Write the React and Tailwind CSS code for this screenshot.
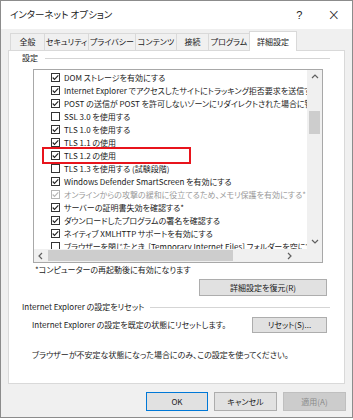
import React from "react";

const Check = ({ checked, disabled }) => (
  <svg width="9" height="9" viewBox="0 0 9 9" className="shrink-0">
    <rect x="0.5" y="0.5" width="8" height="8" fill="white" stroke={disabled ? "#b5b5b5" : "#333333"} />
    {checked && (
      <path d="M1.7 4.5 L3.5 6.4 L7.3 2.4" fill="none" stroke={disabled ? "#b5b5b5" : "#222222"} strokeWidth="1.1" />
    )}
  </svg>
);

const Chevron = ({ dir }) => {
  const d = {
    up: "M1 5 L4 2 L7 5",
    down: "M1 2 L4 5 L7 2",
    left: "M5 1 L2 4 L5 7",
    right: "M2 1 L5 4 L2 7",
  }[dir];
  return (
    <svg width="8" height="8" viewBox="0 0 8 8">
      <path d={d} fill="none" stroke="#606060" strokeWidth="1.2" />
    </svg>
  );
};

const rows = [
  { t: "DOM ストレージを有効にする", c: true },
  { t: "Internet Explorer でアクセスしたサイトにトラッキング拒否要求を送信する", c: true },
  { t: "POST の送信が POST を許可しないゾーンにリダイレクトされた場合に警告する", c: true },
  { t: "SSL 3.0 を使用する", c: false },
  { t: "TLS 1.0 を使用する", c: true },
  { t: "TLS 1.1 の使用", c: true },
  { t: "TLS 1.2 の使用", c: true },
  { t: "TLS 1.3 を使用する (試験段階)", c: false },
  { t: "Windows Defender SmartScreen を有効にする", c: true },
  { t: "オンラインからの攻撃の緩和に役立てるため、メモリ保護を有効にする*", c: true, d: true },
  { t: "サーバーの証明書失効を確認する*", c: true },
  { t: "ダウンロードしたプログラムの署名を確認する", c: true },
  { t: "ネイティブ XMLHTTP サポートを有効にする", c: true },
  { t: "ブラウザーを閉じたとき、[Temporary Internet Files] フォルダーを空にする", c: false },
];

const tabs = [
  { t: "全般", w: 35 },
  { t: "セキュリティ", w: 45 },
  { t: "プライバシー", w: 48 },
  { t: "コンテンツ", w: 42 },
  { t: "接続", w: 33 },
  { t: "プログラム", w: 42 },
];

export default function App() {
  return (
    <div className="w-[353px] h-[420px] bg-white overflow-hidden font-['Noto_Sans_CJK_JP','Noto_Sans',sans-serif] [font-feature-settings:'palt'] text-[#1a1a1a] text-[8px] leading-none">
      <div className="w-[353px] h-[418px] border border-[#8c8c8c] bg-[#f0f0f0] flex flex-col">
        {/* title bar */}
        <div className="h-[28px] bg-white flex items-center pl-[9px] pr-[12px] shrink-0">
          <span className="text-[9.5px]">インターネット オプション</span>
          <span className="ml-auto text-[11px] font-['Liberation_Sans',sans-serif] text-[#222]">?</span>
          <span className="ml-[25px] text-[15px] font-['DejaVu_Sans',sans-serif] font-extralight text-[#222]">×</span>
        </div>
        {/* tabs */}
        <div className="h-[21px] flex items-end pl-[9px] shrink-0">
          {tabs.map((tab, i) => (
            <div
              key={i}
              style={{ width: tab.w }}
              className="h-[17px] border border-b-0 border-[#d9d9d9] -ml-px first:ml-0 flex items-center justify-center bg-[#f0f0f0] whitespace-nowrap"
            >
              {tab.t}
            </div>
          ))}
          <div className="w-[48px] h-[20px] -ml-px border border-b-0 border-[#d9d9d9] bg-white flex items-center justify-center relative top-px z-10 whitespace-nowrap">
            詳細設定
          </div>
        </div>
        {/* panel */}
        <div className="mx-[7px] h-[334px] border border-[#d9d9d9] bg-white flex flex-col shrink-0">
          <div className="mt-[1px] h-[12px] flex items-center pl-[13px] pr-[14px]">
            <span>設定</span>
            <div className="flex-1 h-px bg-[#d5d5d5] ml-[7px]" />
          </div>
          <div className="mt-[5px] ml-[24px] w-[290px] h-[194px] border border-[#a8a8a8] relative flex flex-col">
            <div className="flex flex-1 min-h-0">
              <div className="flex-1 min-w-0 overflow-hidden pt-[1px]">
                {rows.map((r, i) => (
                  <div key={i} className="h-[13px] flex items-center pl-[17px] whitespace-nowrap">
                    <Check checked={r.c} disabled={r.d} />
                    <span className={"ml-[4px] shrink-0 " + (r.d ? "text-[#9a9a9a]" : "")}>{r.t}</span>
                  </div>
                ))}
              </div>
              <div className="w-[15px] bg-[#f0f0f0] flex flex-col items-center">
                <div className="h-[14px] flex items-center justify-center">
                  <Chevron dir="up" />
                </div>
                <div className="mt-[27px] w-[11px] h-[23px] bg-[#cdcdcd]" />
                <div className="mt-auto h-[14px] flex items-center justify-center">
                  <Chevron dir="down" />
                </div>
              </div>
            </div>
            <div className="h-[13px] flex bg-[#f0f0f0]">
              <div className="w-[14px] flex items-center justify-center">
                <Chevron dir="left" />
              </div>
              <div className="w-[185px] h-[11px] mt-px bg-[#cdcdcd]" />
              <div className="flex-1 flex items-center justify-center pl-[46px] pr-[6px]">
                <Chevron dir="right" />
              </div>
              <div className="w-[15px] bg-[#f0f0f0]" />
            </div>
            <div className="absolute left-[8px] top-[77px] w-[149px] h-[17px] border-2 border-[#e8141c]" />
          </div>
          <div className="h-[12px] flex items-center pl-[26px] mt-[1px]">*コンピューターの再起動後に有効になります</div>
          <div className="mt-[3px] flex justify-end pr-[17px]">
            <div className="w-[128px] h-[17px] border border-[#adadad] bg-[#e1e1e1] flex items-center justify-center">
              詳細設定を復元(R)
            </div>
          </div>
          <div className="mt-[5px] h-[12px] flex items-center pl-[13px] pr-[14px]">
            <span>Internet Explorer の設定をリセット</span>
            <div className="flex-1 h-px bg-[#d5d5d5] ml-[6px]" />
          </div>
          <div className="mt-[4px] h-[16px] flex items-center pl-[23px] pr-[17px]">
            <span>Internet Explorer の設定を既定の状態にリセットします。</span>
            <div className="ml-auto w-[75px] h-[16px] border border-[#adadad] bg-[#e1e1e1] flex items-center justify-center">
              リセット(S)...
            </div>
          </div>
          <div className="mt-[16px] h-[12px] flex items-center pl-[23px]">
            ブラウザーが不安定な状態になった場合にのみ、この設定を使ってください。
          </div>
        </div>
        {/* bottom buttons */}
        <div className="mt-[8px] flex justify-end pr-[6px] gap-[6px]">
          <div className="w-[62px] h-[19px] border border-[#0078d7] bg-[#e1e1e1] flex items-center justify-center">OK</div>
          <div className="w-[63px] h-[19px] border border-[#adadad] bg-[#e1e1e1] flex items-center justify-center">キャンセル</div>
          <div className="w-[63px] h-[19px] border border-[#bfbfbf] bg-[#cccccc] text-[#8a8a8a] flex items-center justify-center">適用(A)</div>
        </div>
      </div>
    </div>
  );
}
